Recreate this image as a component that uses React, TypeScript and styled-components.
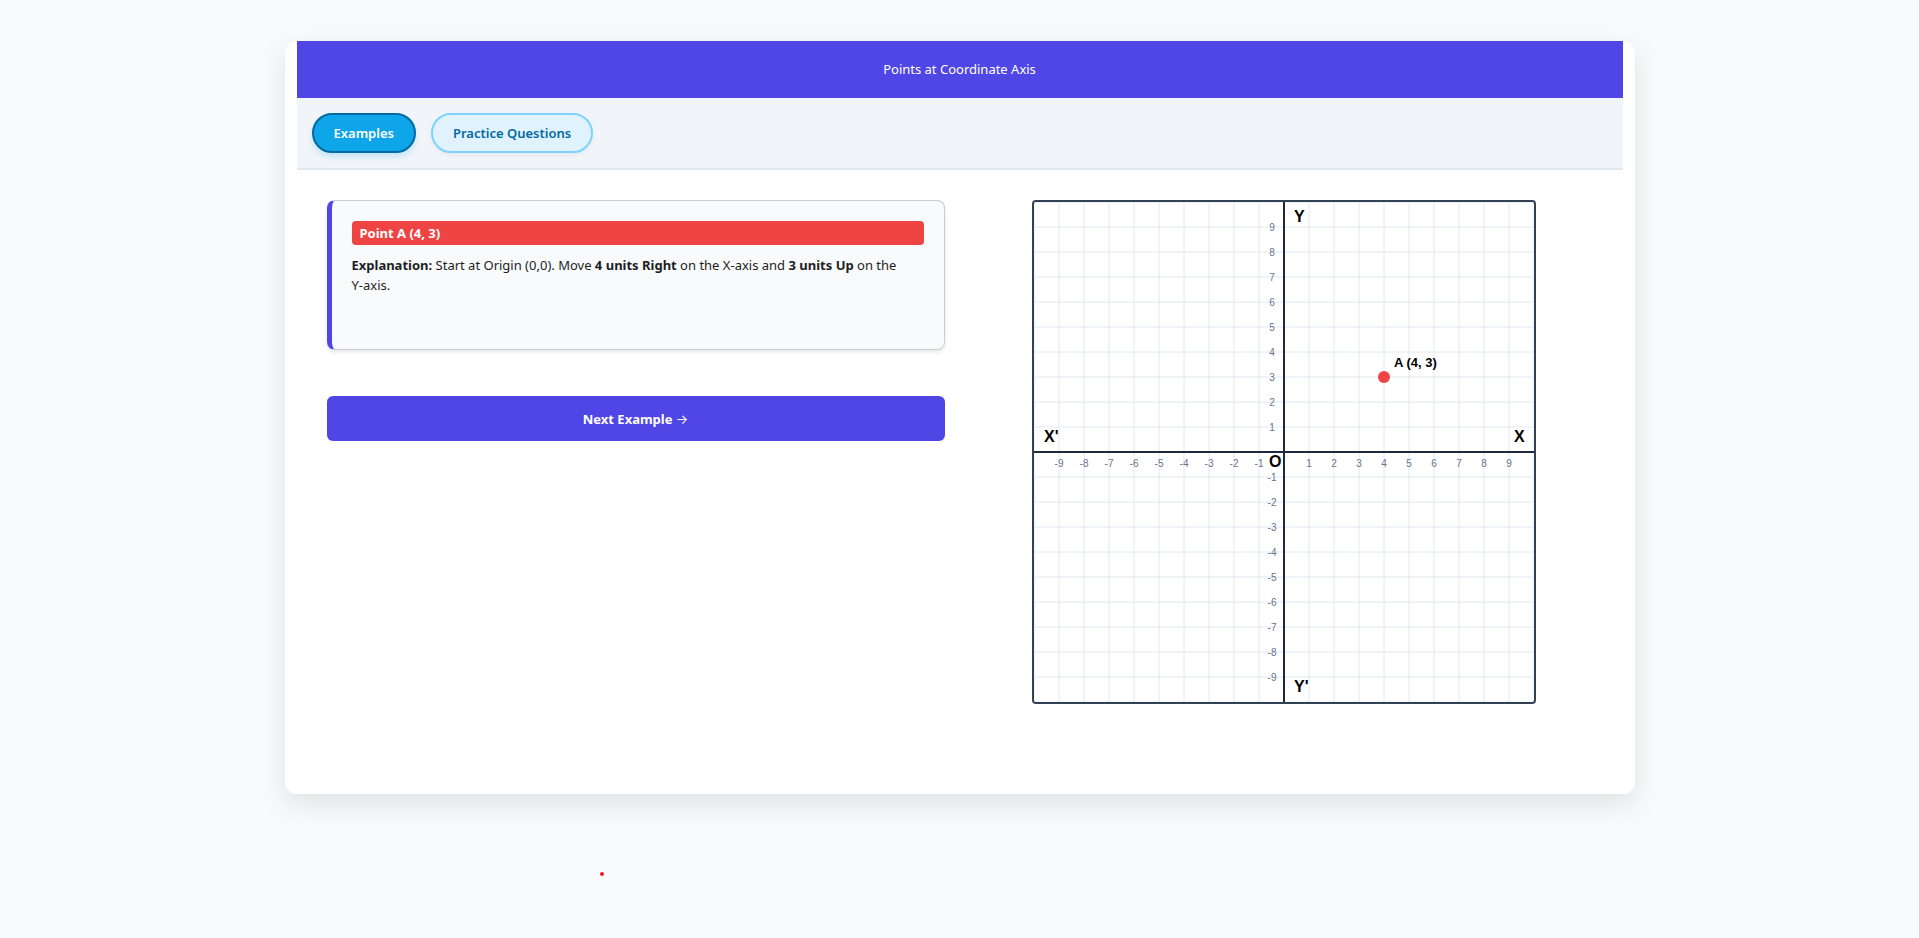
import React, { useState } from "react";
import styled, { createGlobalStyle, css } from "styled-components";

const GlobalStyle = createGlobalStyle`
  *, *::before, *::after { box-sizing: border-box; }
  body {
    margin: 0;
    background: #f8fafc;
    color: #1e1e24;
    font-family: "Segoe UI", "Noto Sans", sans-serif;
    font-size: 13px;
    line-height: 20px;
  }
`;

const Page = styled.div`
  max-width: 1350px;
  margin: 0 auto;
  padding: 41px 0 60px;
`;

const Card = styled.main`
  padding: 0 12px;
  background: #ffffff;
  border-radius: 12px;
  box-shadow: 0 10px 30px rgba(0, 0, 0, 0.1);
`;

const Header = styled.header`
  padding: 18px 20px 19px;
  background: #4f46e5;
  color: #ffffff;
  text-align: center;
`;

const Title = styled.h1`
  margin: 0;
  font-size: 13px;
  font-weight: 400;
`;

const TabBar = styled.nav`
  display: flex;
  flex-wrap: wrap;
  gap: 15px;
  padding: 15px;
  background: #f1f5f9;
  border-bottom: 2px solid #e2e8f0;
`;

const Tab = styled.button<{ $active: boolean }>`
  height: 40px;
  padding: 0 20px;
  border: 2px solid #7dd3fc;
  border-radius: 20px;
  background: #e0f2fe;
  color: #0369a1;
  font: inherit;
  font-weight: 600;
  cursor: pointer;
  box-shadow: 0 2px 4px rgba(0, 0, 0, 0.05);
  ${(p) =>
    p.$active &&
    css`
      border-color: #0369a1;
      background: #0ea5e9;
      color: #ffffff;
      box-shadow: 0 4px 6px rgba(14, 165, 233, 0.2);
    `}
`;

const Content = styled.div`
  display: grid;
  grid-template-columns: repeat(2, minmax(0, 1fr));
  gap: 30px;
  padding: 30px 30px 90px;
  @media (max-width: 1100px) {
    grid-template-columns: minmax(0, 1fr);
  }
`;

const Lesson = styled.section`
  display: flex;
  flex-direction: column;
  gap: 46px;
`;

const Explanation = styled.article`
  min-height: 150px;
  padding: 20px;
  background: #f8fafc;
  border: 1px solid #cccccc;
  border-left: 5px solid #4f46e5;
  border-radius: 8px;
  box-shadow: 0 2px 4px rgba(0, 0, 0, 0.1);
`;

const PointName = styled.h2`
  margin: 0 0 10px;
  padding: 2px 8px;
  background: #ef4444;
  border-radius: 4px;
  color: #ffffff;
  font-size: 13px;
  font-weight: 700;
`;

const Paragraph = styled.p`
  margin: 0;
`;

const NoBreak = styled.span`
  white-space: nowrap;
`;

const NextButton = styled.button`
  height: 45px;
  border: 0;
  border-radius: 6px;
  background: #4f46e5;
  color: #ffffff;
  font: inherit;
  font-weight: 700;
  cursor: pointer;
`;

const Arrow = styled.span`
  font-family: Inter, sans-serif;
  font-weight: 400;
  line-height: 1;
`;

const ChartColumn = styled.section`
  display: flex;
  justify-content: center;
  align-items: flex-start;
`;

const Chart = styled.svg`
  display: block;
  width: 504px;
  max-width: 100%;
  border: 2px solid #334155;
  border-radius: 4px;
  background: #ffffff;
  font-family: Arial, "Liberation Sans", sans-serif;
`;

const Tick = styled.text`
  fill: #64748b;
  font-size: 10px;
  text-anchor: middle;
`;

const AxisName = styled.text`
  fill: #000000;
  font-size: 16px;
  font-weight: 700;
`;

const PointLabel = styled.text`
  fill: #000000;
  font-size: 13px;
  font-weight: 700;
`;

const PointerDot = styled.div`
  width: 4px;
  height: 4px;
  margin: 78px 0 0 315px;
  border-radius: 50%;
  background: #ed1c24;
`;

const UNIT = 25;
const SIZE = 500;
const CENTER = SIZE / 2;
const lines = Array.from({ length: 21 }, (_, i) => i * UNIT);
const ticks = Array.from({ length: 19 }, (_, i) => i - 9).filter((n) => n !== 0);

function CoordinatePlane({ name, x, y }: { name: string; x: number; y: number }) {
  const px = CENTER + x * UNIT;
  const py = CENTER - y * UNIT;
  return (
    <Chart viewBox={`0 0 ${SIZE} ${SIZE}`} role="img" aria-label="Coordinate plane">
      {lines.map((p) => (
        <g key={p} stroke="#e2e8f0" strokeWidth="1">
          <line x1={p} y1={0} x2={p} y2={SIZE} />
          <line x1={0} y1={p} x2={SIZE} y2={p} />
        </g>
      ))}
      <g stroke="#1e293b" strokeWidth="2">
        <line x1={0} y1={CENTER} x2={SIZE} y2={CENTER} />
        <line x1={CENTER} y1={0} x2={CENTER} y2={SIZE} />
      </g>
      {ticks.map((n) => (
        <g key={n}>
          <Tick x={CENTER + n * UNIT} y={CENTER + 15}>{n}</Tick>
          <Tick x={CENTER - 12} y={CENTER - n * UNIT + 4}>{n}</Tick>
        </g>
      ))}
      <AxisName x={480} y={240}>X</AxisName>
      <AxisName x={10} y={240}>X'</AxisName>
      <AxisName x={260} y={20}>Y</AxisName>
      <AxisName x={260} y={490}>Y'</AxisName>
      <AxisName x={235} y={265}>O</AxisName>
      <circle cx={px} cy={py} r={6} fill="#ef4444" />
      <PointLabel x={px + 10} y={py - 10}>{`${name} (${x}, ${y})`}</PointLabel>
    </Chart>
  );
}

const tabs = ["Examples", "Practice Questions"];

export default function App() {
  const [active, setActive] = useState(tabs[0]);
  return (
    <>
      <GlobalStyle />
      <Page>
        <Card>
          <Header>
            <Title>Points at Coordinate Axis</Title>
          </Header>
          <TabBar>
            {tabs.map((t) => (
              <Tab key={t} type="button" $active={t === active} onClick={() => setActive(t)}>
                {t}
              </Tab>
            ))}
          </TabBar>
          <Content>
            <Lesson>
              <Explanation>
                <PointName>Point A (4, 3)</PointName>
                <Paragraph>
                  <b>Explanation:</b> Start at Origin (0,0). Move <b>4 units Right</b> on the X-axis
                  and <b>3 units Up</b> on the <NoBreak>Y-axis.</NoBreak>
                </Paragraph>
              </Explanation>
              <NextButton type="button">
                Next Example <Arrow>→</Arrow>
              </NextButton>
            </Lesson>
            <ChartColumn>
              <CoordinatePlane name="A" x={4} y={3} />
            </ChartColumn>
          </Content>
        </Card>
        <PointerDot />
      </Page>
    </>
  );
}
